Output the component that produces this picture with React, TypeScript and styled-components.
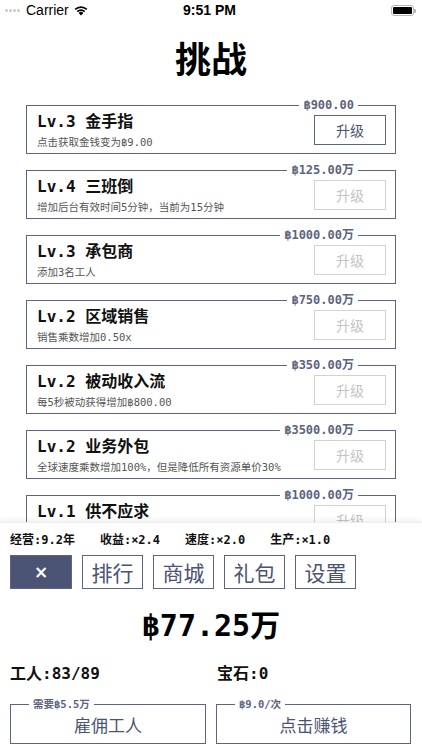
import React from "react";
import styled, { createGlobalStyle } from "styled-components";

const Global = createGlobalStyle`
  html, body { margin: 0; padding: 0; background: #fff; }
  body { font-family: "DejaVu Sans Mono", "Noto Sans CJK SC", monospace; }
  * { box-sizing: border-box; }
`;

const NAVY = "#4b5372";
const LINE = "#5d6480";

const Page = styled.div`
  width: 422px;
  height: 750px;
  display: flex;
  flex-direction: column;
  overflow: hidden;
`;

const StatusBar = styled.div`
  height: 20px;
  display: grid;
  grid-template-columns: 1fr auto 1fr;
  align-items: center;
  padding: 0 8px 0 5px;
  font-family: "Liberation Sans", "Noto Sans", sans-serif;
  font-size: 14px;
  color: #000;
`;

const Left = styled.div`
  display: flex;
  align-items: center;
  gap: 4px;
`;

const Dots = styled.span`
  display: flex;
  gap: 1px;
  align-items: flex-end;
  margin-right: 2px;
  & > i {
    width: 3px;
    height: 3px;
    border-radius: 50%;
    background: #c8c8c8;
    display: block;
  }
`;

const Time = styled.div`
  font-weight: 600;
`;

const Right = styled.div`
  display: flex;
  justify-content: flex-end;
`;

const Battery = styled.div`
  width: 23px;
  height: 11px;
  border: 1px solid #b8b8b8;
  border-radius: 3px;
  padding: 1px;
  position: relative;
  &::after {
    content: "";
    position: absolute;
    right: -3px;
    top: 3px;
    width: 2px;
    height: 4px;
    background: #b8b8b8;
    border-radius: 0 1px 1px 0;
  }
  & > i {
    display: block;
    width: 100%;
    height: 100%;
    background: #000;
    border-radius: 1px;
  }
`;

const Title = styled.h1`
  margin: 0;
  height: 74px;
  display: flex;
  align-items: center;
  justify-content: center;
  font-family: "Noto Sans CJK SC", sans-serif;
  font-size: 36px;
  font-weight: 700;
  color: #000;
`;

const List = styled.div`
  flex: 1;
  overflow: hidden;
  padding: 4px 26px 0;
  display: flex;
  flex-direction: column;
  gap: 9px;
`;

const Card = styled.fieldset`
  margin: 0;
  border: 1px solid ${LINE};
  padding: 0 9px 4px 10px;
  min-width: 0;
  flex-shrink: 0;
`;

const Price = styled.legend`
  margin-left: auto;
  margin-right: 28px;
  padding: 0 4px;
  font-size: 12px;
  font-weight: 700;
  color: ${LINE};
  line-height: 14px;
`;

const CardRow = styled.div`
  display: flex;
  align-items: flex-start;
  justify-content: space-between;
`;

const Info = styled.div`
  display: flex;
  flex-direction: column;
  gap: 3px;
  min-width: 0;
`;

const Name = styled.div`
  font-size: 16px;
  font-weight: 700;
  color: #111;
  line-height: 20px;
  white-space: pre;
`;

const Desc = styled.div`
  font-size: 10.5px;
  color: #555;
  line-height: 14px;
  white-space: nowrap;
`;

const Upgrade = styled.button<{ $enabled: boolean }>`
  flex-shrink: 0;
  width: 72px;
  height: 30px;
  margin-top: 3px;
  background: #fff;
  border: 1px solid ${(p) => (p.$enabled ? LINE : "#d2d2d2")};
  color: ${(p) => (p.$enabled ? NAVY : "#c4c4c4")};
  font-family: "Noto Sans CJK SC", sans-serif;
  font-size: 14px;
  padding: 0;
`;

const Panel = styled.div`
  flex-shrink: 0;
  height: 228px;
  background: #fff;
  box-shadow: 0 -3px 4px rgba(0, 0, 0, 0.05);
  border-top: 1px solid #eeeeee;
  padding: 9px 10px 0;
  display: flex;
  flex-direction: column;
  position: relative;
  z-index: 1;
`;

const Stats = styled.div`
  display: flex;
  gap: 25px;
  font-size: 12px;
  font-weight: 700;
  color: #111;
  line-height: 16px;
`;

const Tabs = styled.div`
  display: flex;
  gap: 10px;
  margin-top: 7px;
`;

const Tab = styled.button<{ $active?: boolean }>`
  width: ${(p) => (p.$active ? 62 : 61)}px;
  height: 34px;
  padding: 0;
  border: 1px solid ${LINE};
  background: ${(p) => (p.$active ? "#4b5475" : "#fff")};
  color: ${(p) => (p.$active ? "#fff" : NAVY)};
  font-family: ${(p) => (p.$active ? '"DejaVu Sans", sans-serif' : '"Noto Sans CJK SC", sans-serif')};
  font-size: ${(p) => (p.$active ? 17 : 21)}px;
  font-weight: ${(p) => (p.$active ? 700 : 400)};
  line-height: 1;
`;

const Money = styled.div`
  margin-top: 17px;
  text-align: center;
  font-size: 30px;
  font-weight: 700;
  color: #000;
  line-height: 40px;
`;

const Resources = styled.div`
  margin-top: 18px;
  display: grid;
  grid-template-columns: 207px 1fr;
  font-size: 16px;
  font-weight: 700;
  color: #111;
  line-height: 20px;
`;

const Actions = styled.div`
  margin-top: 14px;
  display: grid;
  grid-template-columns: 196px 195px;
  gap: 10px;
`;

const Action = styled.fieldset`
  margin: 0;
  min-width: 0;
  border: 1px solid ${LINE};
  padding: 0 0 4px;
  height: 46px;
  display: flex;
  align-items: center;
  justify-content: center;
  font-family: "Noto Sans CJK SC", sans-serif;
  font-size: 17px;
  color: ${NAVY};
`;

const ActionLabel = styled.legend`
  margin-left: 18px;
  padding: 0 4px;
  font-family: "DejaVu Sans Mono", "Noto Sans CJK SC", monospace;
  font-size: 10.5px;
  font-weight: 700;
  color: ${LINE};
  line-height: 12px;
`;

const ActionText = styled.div`
  line-height: 24px;
`;

const upgrades = [
  { lv: 3, name: "金手指", desc: "点击获取金钱变为฿9.00", price: "฿900.00", on: true },
  { lv: 4, name: "三班倒", desc: "增加后台有效时间5分钟，当前为15分钟", price: "฿125.00万", on: false },
  { lv: 3, name: "承包商", desc: "添加3名工人", price: "฿1000.00万", on: false },
  { lv: 2, name: "区域销售", desc: "销售乘数增加0.50x", price: "฿750.00万", on: false },
  { lv: 2, name: "被动收入流", desc: "每5秒被动获得增加฿800.00", price: "฿350.00万", on: false },
  { lv: 2, name: "业务外包", desc: "全球速度乘数增加100%，但是降低所有资源单价30%", price: "฿3500.00万", on: false },
  { lv: 1, name: "供不应求", desc: "市场需求增加", price: "฿1000.00万", on: false },
];

const Wifi = () => (
  <svg width="16" height="12" viewBox="0 0 16 12">
    <path d="M8 11.5 L5.6 8.9 A3.4 3.4 0 0 1 10.4 8.9 Z" fill="#000" />
    <path d="M3.7 7 A6.1 6.1 0 0 1 12.3 7 L11.1 8.3 A4.4 4.4 0 0 0 4.9 8.3 Z" fill="#000" />
    <path d="M1.6 4.8 A9.1 9.1 0 0 1 14.4 4.8 L13.2 6.1 A7.4 7.4 0 0 0 2.8 6.1 Z" fill="#000" />
  </svg>
);

export default function App() {
  return (
    <Page>
      <Global />
      <StatusBar>
        <Left>
          <Dots>
            <i />
            <i />
            <i />
            <i />
          </Dots>
          <span>Carrier</span>
          <Wifi />
        </Left>
        <Time>9:51 PM</Time>
        <Right>
          <Battery>
            <i />
          </Battery>
        </Right>
      </StatusBar>
      <Title>挑战</Title>
      <List>
        {upgrades.map((u, i) => (
          <Card key={i}>
            <Price>{u.price}</Price>
            <CardRow>
              <Info>
                <Name>{`Lv.${u.lv} ${u.name}`}</Name>
                <Desc>{u.desc}</Desc>
              </Info>
              <Upgrade $enabled={u.on}>升级</Upgrade>
            </CardRow>
          </Card>
        ))}
      </List>
      <Panel>
        <Stats>
          <span>经营:9.2年</span>
          <span>收益:×2.4</span>
          <span>速度:×2.0</span>
          <span>生产:×1.0</span>
        </Stats>
        <Tabs>
          <Tab $active>×</Tab>
          <Tab>排行</Tab>
          <Tab>商城</Tab>
          <Tab>礼包</Tab>
          <Tab>设置</Tab>
        </Tabs>
        <Money>฿77.25万</Money>
        <Resources>
          <span>工人:83/89</span>
          <span>宝石:0</span>
        </Resources>
        <Actions>
          <Action>
            <ActionLabel>需要฿5.5万</ActionLabel>
            <ActionText>雇佣工人</ActionText>
          </Action>
          <Action>
            <ActionLabel>฿9.0/次</ActionLabel>
            <ActionText>点击赚钱</ActionText>
          </Action>
        </Actions>
      </Panel>
    </Page>
  );
}
